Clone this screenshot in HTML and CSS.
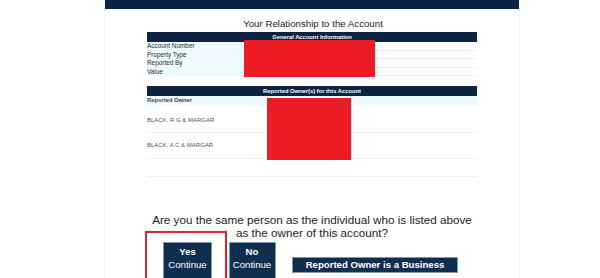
FILE: index.html
```html
<!DOCTYPE html>
<html lang="en">
<head>
<meta charset="utf-8">
<title>Your Relationship to the Account</title>
<link rel="stylesheet" href="styles.css">
</head>
<body>
<div class="page">
  <div class="topbar"></div>
  <h1 class="title">Your Relationship to the Account</h1>

  <div class="tbl">
    <div class="tbl-head">General Account Information</div>
    <div class="info-row"><div class="lbl">Account Number</div><div class="val"></div></div>
    <div class="info-row"><div class="lbl">Property Type</div><div class="val"></div></div>
    <div class="info-row"><div class="lbl">Reported By</div><div class="val"></div></div>
    <div class="info-row"><div class="lbl">Value</div><div class="val"></div></div>
  </div>

  <div class="tbl tbl-owners">
    <div class="tbl-head">Reported Owner(s) for this Account</div>
    <div class="sub-head">Reported Owner</div>
    <div class="owner-row">BLACK, R G &amp; MARGAR</div>
    <div class="owner-row owner-row-2">BLACK, A C &amp; MARGAR</div>
  </div>

  <div class="divider"></div>

  <p class="question">Are you the same person as the individual who is listed above<br>as the owner of this account?</p>

  <div class="actions">
    <button class="btn btn-tall"><b>Yes</b><span>Continue</span></button>
    <button class="btn btn-tall btn-no"><b>No</b><span>Continue</span></button>
    <button class="btn btn-wide">Reported Owner is a Business</button>
  </div>

  <div class="redact redact-1"></div>
  <div class="redact redact-2"></div>
  <div class="highlight"></div>
</div>
</body>
</html>
```

FILE: styles.css
```css
html, body {
  margin: 0;
  padding: 0;
  background: #ffffff;
  overflow: hidden;
}

body {
  font-family: "Liberation Sans", Arial, sans-serif;
  width: 600px;
  height: 278px;
}

.page {
  position: relative;
  margin-left: 104px;
  width: 414px;
  height: 278px;
  overflow: hidden;
  border-left: 1px solid #f3f4f5;
  border-right: 1px solid #f3f4f5;
}

.topbar {
  height: 9px;
  background: #0b2444;
}

.title {
  margin: 9px 0 2px 0;
  font-size: 9.7px;
  line-height: 12px;
  font-weight: normal;
  text-align: center;
  color: #222;
  padding-left: 2px;
}

.tbl {
  margin-left: 42px;
  width: 330px;
}

.tbl-head {
  height: 10px;
  line-height: 10px;
  background: #0c2342;
  color: #ffffff;
  font-size: 5.8px;
  font-weight: bold;
  text-align: center;
}

.info-row {
  display: flex;
  height: 8.5px;
  border-bottom: 1px solid #eef2f3;
  box-sizing: border-box;
}

.lbl {
  width: 97px;
  background: #eefafd;
  font-size: 6.4px;
  line-height: 8.5px;
  color: #2c2c2c;
}

.val {
  flex: 1;
}

.tbl-owners {
  margin-top: 10px;
}

.sub-head {
  height: 10px;
  line-height: 9px;
  background: #eefafd;
  font-size: 5.8px;
  font-weight: bold;
  color: #444;
}

.owner-row {
  height: 27px;
  line-height: 28px;
  font-size: 6px;
  color: #555;
  border-bottom: 1px solid #eef0f1;
  box-sizing: border-box;
}

.owner-row-2 {
  height: 26px;
  line-height: 25px;
}

.divider {
  margin: 17px 0 0 42px;
  width: 330px;
  border-top: 1px solid #f0f1f2;
}

.question {
  margin: 35.5px 0 0 0;
  font-size: 11.7px;
  line-height: 13px;
  text-align: center;
  color: #222;
}

.actions {
  display: flex;
  justify-content: center;
  align-items: flex-start;
  gap: 16.5px;
  margin-top: 3.5px;
  padding-right: 3px;
}

.btn {
  font-family: "Liberation Sans", Arial, sans-serif;
  background: #0f2f4e;
  color: #ffffff;
  border: 1px solid #8695a8;
  padding: 0;
  font-size: 9.6px;
  cursor: pointer;
}

.btn-tall {
  width: 49px;
  height: 37px;
  display: flex;
  flex-direction: column;
  align-items: center;
  padding-top: 2px;
  box-sizing: border-box;
  line-height: 13px;
}

.btn-tall b {
  font-weight: bold;
}

.btn-no {
  width: 47px;
}

.btn-wide {
  width: 166px;
  height: 16px;
  margin-top: 15px;
  font-weight: bold;
  line-height: 14px;
}

.redact {
  position: absolute;
  background: #ed1c24;
}

.redact-1 {
  left: 139px;
  top: 40px;
  width: 131px;
  height: 37px;
}

.redact-2 {
  left: 162px;
  top: 98px;
  width: 84px;
  height: 62px;
}

.highlight {
  position: absolute;
  left: 40px;
  top: 231px;
  width: 78px;
  height: 60px;
  border: 2px solid #d9262f;
}
```
